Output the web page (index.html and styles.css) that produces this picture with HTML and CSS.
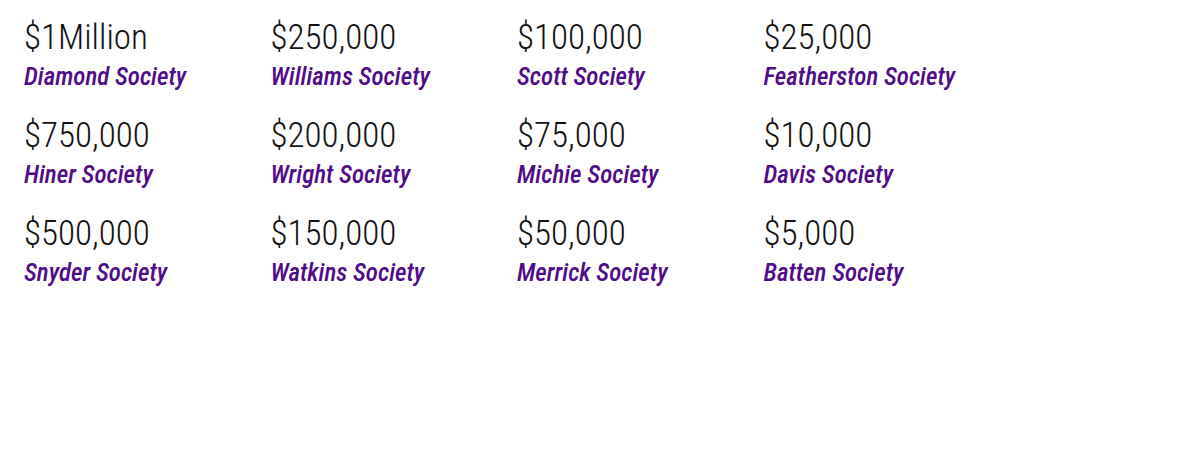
FILE: index.html
```html
<!DOCTYPE html>
<html>
<head>
<meta charset="utf-8">
<link rel="stylesheet" href="styles.css">
</head>
<body>
<div class="grid">
  <div class="item"><div class="amount">$1Million</div><div class="name">Diamond Society</div></div>
  <div class="item"><div class="amount">$250,000</div><div class="name">Williams Society</div></div>
  <div class="item"><div class="amount">$100,000</div><div class="name">Scott Society</div></div>
  <div class="item"><div class="amount">$25,000</div><div class="name">Featherston Society</div></div>
  <div class="item"><div class="amount">$750,000</div><div class="name">Hiner Society</div></div>
  <div class="item"><div class="amount">$200,000</div><div class="name">Wright Society</div></div>
  <div class="item"><div class="amount">$75,000</div><div class="name">Michie Society</div></div>
  <div class="item"><div class="amount">$10,000</div><div class="name">Davis Society</div></div>
  <div class="item"><div class="amount">$500,000</div><div class="name">Snyder Society</div></div>
  <div class="item"><div class="amount">$150,000</div><div class="name">Watkins Society</div></div>
  <div class="item"><div class="amount">$50,000</div><div class="name">Merrick Society</div></div>
  <div class="item"><div class="amount">$5,000</div><div class="name">Batten Society</div></div>
</div>
</body>
</html>
```
FILE: styles.css
```css
html, body {
  margin: 0;
  padding: 0;
  background: #fff;
}
body {
  font-family: Roboto, "Liberation Sans", sans-serif;
}
.grid {
  display: grid;
  grid-template-columns: repeat(4, 246.5px);
  padding: 17px 24px 0;
}
.item {
  height: 98px;
}
.amount {
  font-size: 35px;
  font-weight: 300;
  font-stretch: 75%;
  color: #111;
  line-height: 42px;
}
.name {
  margin-top: 3px;
  font-size: 25px;
  font-weight: 500;
  font-style: italic;
  font-stretch: 75%;
  color: #500c88;
  line-height: 30px;
}
```
